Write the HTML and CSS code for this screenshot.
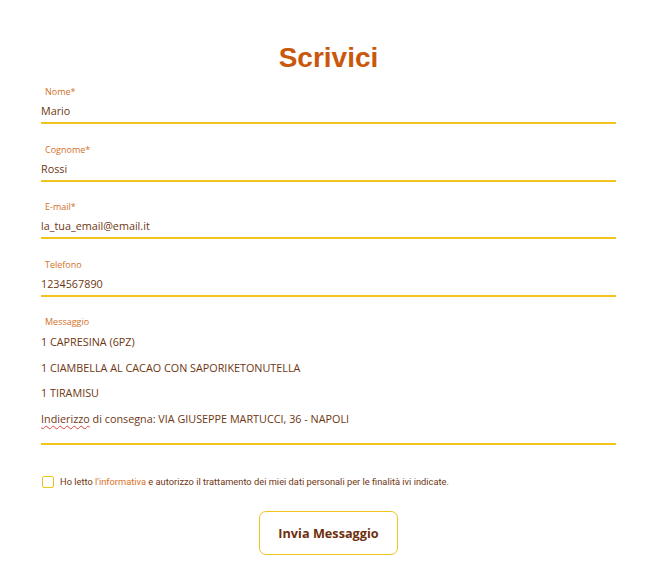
FILE: index.html
```html
<!DOCTYPE html>
<html lang="it">
<head>
<meta charset="utf-8">
<title>Scrivici</title>
<link rel="stylesheet" href="styles.css">
</head>
<body>
<main class="contact">
  <h1 class="title">Scrivici</h1>
  <form class="form">
    <div class="field">
      <div class="label">Nome*</div>
      <div class="value">Mario</div>
    </div>
    <div class="field">
      <div class="label">Cognome*</div>
      <div class="value">Rossi</div>
    </div>
    <div class="field">
      <div class="label">E-mail*</div>
      <div class="value">la_tua_email@email.it</div>
    </div>
    <div class="field">
      <div class="label">Telefono</div>
      <div class="value">1234567890</div>
    </div>
    <div class="field field-message">
      <div class="label">Messaggio</div>
      <div class="value textarea">
        <div class="line">1 CAPRESINA (6PZ)</div>
        <div class="line">1 CIAMBELLA AL CACAO CON SAPORIKETONUTELLA</div>
        <div class="line">1 TIRAMISU</div>
        <div class="line"><span class="misspelled">Indierizzo</span> di consegna: VIA GIUSEPPE MARTUCCI, 36 - NAPOLI</div>
      </div>
    </div>
    <label class="consent">
      <span class="checkbox"></span>
      <span class="consent-text">Ho letto <a class="link" href="#">l'informativa</a> e autorizzo il trattamento dei miei dati personali per le finalità ivi indicate.</span>
    </label>
    <div class="actions">
      <button type="button" class="submit">Invia Messaggio</button>
    </div>
  </form>
</main>
</body>
</html>
```

FILE: styles.css
```css
html, body {
  margin: 0;
  padding: 0;
  background: #ffffff;
}

body {
  font-family: "Open Sans", "Noto Sans", sans-serif;
  color: #6e3612;
}

.contact {
  width: 575px;
  margin: 0 auto;
  padding-top: 39px;
}

.title {
  margin: 0;
  text-align: center;
  font-family: "Liberation Sans", Arial, sans-serif;
  font-weight: 700;
  font-size: 28px;
  line-height: 38px;
  color: #c9580c;
}

.form {
  display: flex;
  flex-direction: column;
  margin-top: 9px;
}

.field {
  display: flex;
  flex-direction: column;
  gap: 3px;
  padding-bottom: 1px;
  border-bottom: 2px solid #f1c41d;
  margin-bottom: 19.5px;
}

.label {
  padding-left: 4px;
  font-size: 9px;
  line-height: 12px;
  color: #d2711f;
}

.value {
  font-size: 10.8px;
  line-height: 20px;
  color: #6e3612;
}

.textarea {
  line-height: 25.7px;
  padding-bottom: 10px;
  margin-top: -2px;
}

.misspelled {
  text-decoration: underline wavy #e0413a;
  text-decoration-thickness: 1px;
  text-underline-offset: 2px;
}

.field-message {
  margin-bottom: 30px;
}

.consent {
  display: flex;
  align-items: center;
  gap: 6px;
  padding-left: 1px;
  font-family: Roboto, "Open Sans", sans-serif;
  font-size: 9.3px;
  line-height: 14px;
  color: #6e3612;
}

.checkbox {
  flex: none;
  width: 10px;
  height: 10px;
  border: 1.5px solid #f1c41d;
  border-radius: 2px;
}

.link {
  color: #d8711f;
  text-decoration: none;
}

.actions {
  display: flex;
  justify-content: center;
  margin-top: 22px;
}

.submit {
  width: 139px;
  height: 44px;
  background: #ffffff;
  border: 1.5px solid #f1c41d;
  border-radius: 7px;
  font-family: "Open Sans", "Noto Sans", sans-serif;
  font-weight: 700;
  font-size: 12.7px;
  color: #6e2f0c;
  cursor: pointer;
}
```
